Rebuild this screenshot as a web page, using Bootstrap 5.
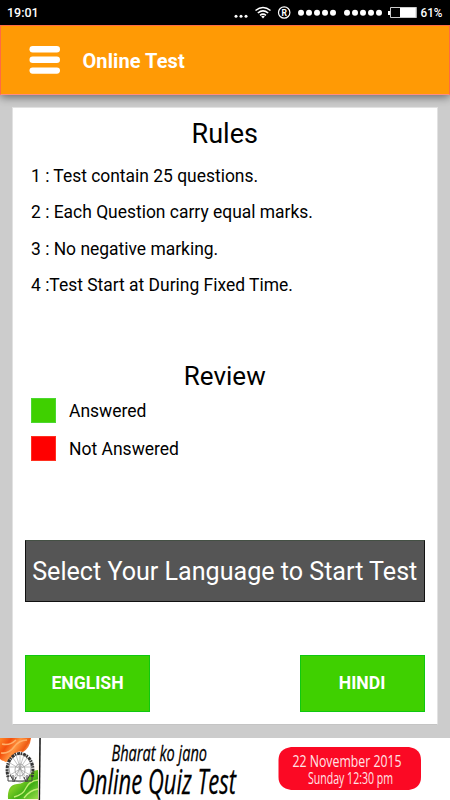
<!DOCTYPE html>
<html lang="en">
<head>
<meta charset="utf-8">
<meta name="viewport" content="width=device-width, initial-scale=1">
<title>Online Test</title>
<link href="https://cdn.jsdelivr.net/npm/bootstrap@5.3.0/dist/css/bootstrap.min.css" rel="stylesheet">
<style>
body{font-family:Roboto,"Liberation Sans",sans-serif;background:#ccc;color:#000;width:450px;height:800px;overflow:hidden}
.statusbar{height:25px;font-size:12.5px;font-weight:500;line-height:25px;padding:0 7px}
.appbar{height:70px;background:#ff9a05;border:1px solid #ff6a45;border-bottom:1px solid #ff8c80;box-shadow:0 2px 9px rgba(0,0,0,.5);padding-left:28px;gap:21.5px}
.appbar h1{font-size:20px;letter-spacing:.08px;line-height:24px;padding-top:1px}
.sheet{margin:12px 12.5px 0 12px;height:618px;padding:0 12px;border:1px solid #e2e2e2;border-bottom-color:#c4c4c4}
.heading{font-size:27px;line-height:50px;font-weight:400;padding-top:1px}
.heading-rules{margin-bottom:-1px}
.heading-review{font-size:26px;line-height:36px;margin-top:54px}
.rules{padding-left:6px;font-size:17.45px;line-height:36.3px}
.legend{padding-left:6px;gap:12.5px;font-size:17.5px;margin-top:4px}
.legend .entry{height:25px;gap:13px}
.legend .label-text{padding-top:1px}
.swatch{width:25px;height:25px}
.sw-yes{background:#3fd000;border:1px solid #4cd830}
.sw-no{background:#f00;border:1px solid #ff3020}
.prompt{height:62px;margin-top:79px;background:#555;border:1px solid #111;border-top-color:#445044;color:#fff;font-size:25.1px;line-height:62px}
.choices{margin-top:53px}
.choices .btn{width:125px;height:57px;background:#3fd000;border:1px solid #0fc810;color:#fff;font-size:17.6px;font-weight:700}
.banner{margin-top:13px;height:62px}
</style>
<script src="https://cdn.jsdelivr.net/npm/bootstrap@5.3.0/dist/js/bootstrap.bundle.min.js"></script>
</head>
<body>
<div class="statusbar bg-black text-white d-flex justify-content-between">
  <span>19:01</span>
  <svg width="211" height="25" viewBox="232 0 211 25" fill="#fff">
    <circle cx="236" cy="16.200" r="1.500"/><circle cx="241" cy="16.200" r="1.500"/><circle cx="246" cy="16.200" r="1.500"/>
    <g fill="none" stroke="#fff" stroke-width="1.600"><path d="M255.500 10.500Q263 4.500 270.500 10.500M257.800 13Q263 8.800 268.200 13M260 15.300Q263 13 266 15.300"/></g>
    <path d="M261.200 16.500Q263 15.200 264.800 16.500L263 18.500Z"/>
    <circle cx="284.200" cy="12.500" r="5.700" fill="none" stroke="#fff" stroke-width="1.200"/>
    <text x="284.300" y="15.600" font-size="8.500" font-weight="700" text-anchor="middle">R</text>
    <g><circle cx="301" cy="12.700" r="3"/><circle cx="309" cy="12.700" r="3"/><circle cx="317" cy="12.700" r="3"/><circle cx="325" cy="12.700" r="3"/><circle cx="333" cy="12.700" r="3"/></g>
    <g><circle cx="347" cy="12.700" r="3"/><circle cx="355" cy="12.700" r="3"/><circle cx="363" cy="12.700" r="3"/><circle cx="371" cy="12.700" r="3"/><circle cx="379" cy="12.700" r="3"/></g>
    <path d="M388 11h2v4h-2zM400 7h16.500v11H400z"/><path d="M390.500 7.500h25.500v10h-25.500z" fill="none" stroke="#ccc"/>
    <text x="420.500" y="17" font-size="12.500" font-weight="500" textLength="22" lengthAdjust="spacingAndGlyphs">61%</text>
  </svg>
</div>
<header class="appbar d-flex align-items-center position-relative">
  <svg width="32" height="28" fill="#fff"><rect x=".5" y="0" width="30.500" height="6.500" rx="3.200"/><rect x=".5" y="10.500" width="30.500" height="6.500" rx="3.200"/><rect x=".5" y="21.500" width="30.500" height="6.200" rx="3.100"/></svg>
  <h1 class="m-0 fw-bold text-white">Online Test</h1>
</header>
<main class="sheet bg-white">
  <h2 class="heading heading-rules mt-0 text-center">Rules</h2>
  <div class="rules">
    <div>1 : Test contain 25 questions.</div>
    <div>2 : Each Question carry equal marks.</div>
    <div>3 : No negative marking.</div>
    <div>4 :Test Start at During Fixed Time.</div>
  </div>
  <h2 class="heading heading-review mb-0 text-center">Review</h2>
  <div class="legend d-flex flex-column">
    <div class="entry d-flex align-items-center"><span class="swatch sw-yes"></span><span class="label-text">Answered</span></div>
    <div class="entry d-flex align-items-center"><span class="swatch sw-no"></span><span class="label-text">Not Answered</span></div>
  </div>
  <div class="prompt text-center text-nowrap">Select Your Language to Start Test</div>
  <div class="choices d-flex justify-content-between">
    <button class="btn rounded-0 p-0">ENGLISH</button>
    <button class="btn rounded-0 p-0">HINDI</button>
  </div>
</main>
<footer class="banner bg-white">
  <svg class="d-block" width="450" height="62" viewBox="0 738 450 62" font-family="'Open Sans','Noto Sans',sans-serif">
    <defs>
      <linearGradient id="saffron" x1="0" y1="0" x2="1" y2=".5"><stop offset="0" stop-color="#ff8a2a"/><stop offset=".3" stop-color="#f4500c"/><stop offset=".55" stop-color="#ff9440"/><stop offset=".8" stop-color="#ee5a12"/><stop offset="1" stop-color="#ffd29a"/></linearGradient>
      <linearGradient id="leaf" x1="0" y1="0" x2="1" y2="1"><stop offset="0" stop-color="#3c9a10"/><stop offset=".4" stop-color="#7ccc24"/><stop offset=".65" stop-color="#3fae14"/><stop offset="1" stop-color="#9be04a"/></linearGradient>
      <linearGradient id="paper" x1="0" y1="0" x2="1" y2="1"><stop offset="0" stop-color="#fff"/><stop offset=".6" stop-color="#fff"/><stop offset="1" stop-color="#fff0cc"/></linearGradient>
    </defs>
    <path d="M0 738h39v62H0z" fill="url(#paper)"/>
    <path d="M0 738h31q-1 10-8 14-6-2-11 5-5 7-8 4-2 0-4-2z" fill="url(#saffron)"/>
    <path d="M2 744q8 2 14-4M1 753q8 1 13-6t13-7" fill="none" stroke="#ffb06a" stroke-width="1.500"/>
    <path d="M8 799q-1-14 9-15 8 0 12-8 3-6 9-6v29z" fill="url(#leaf)"/>
    <path d="M14 797q9-2 12-9t12-8M24 798q6-8 14-9" fill="none" stroke="#c3ef75" stroke-width="1.300"/>
    <g fill="none" stroke="#222" transform="translate(20 767)">
      <ellipse cy="1" rx="11" ry="14" stroke="#aaa" fill="#fff" fill-opacity=".7"/>
      <path d="M-12 10Q-15-3-8-10T8-10Q15-3 12 10" stroke="#333" stroke-width="3" stroke-dasharray="1.500 1 3 .7"/>
      <ellipse cy="3" rx="5" ry="6" stroke="#888" stroke-width=".7" fill="#fff"/>
      <path d="M0-13V12M-10 0H10M-7-9L7 12M-7 12L7-9M-4-12L4 12M4-12L-4 12M-10-4L10 8M-10 8L10-4" stroke="#999" stroke-width=".6"/>
      <path d="M-12 8v6h24V8M-10 8l3 5M-7 8v7M-4 10l-2 5M4 10l2 5M7 8v7M10 8l-3 5" stroke="#444" stroke-width="1"/>
    </g>
    <path d="M39.300 738h1.500l-.7 62h-1.400z" fill="#111"/>
    <g font-style="italic" fill="#000" stroke="#000" stroke-width=".3">
      <text x="111.500" y="760.500" font-size="22" textLength="95.500" lengthAdjust="spacingAndGlyphs">Bharat ko jano</text>
      <text x="79" y="793.500" font-size="34" textLength="157" lengthAdjust="spacingAndGlyphs">Online Quiz Test</text>
    </g>
    <path d="M291 747H409Q421 749 421 760V777Q421 788 409 790H291Q278.500 788 278.500 777V760Q278.500 749 291 747Z" fill="#fb0924"/>
    <g fill="#ffe4e6">
      <text x="292.500" y="766.500" font-size="17" textLength="109" lengthAdjust="spacingAndGlyphs">22 November 2015</text>
      <text x="308" y="783.500" font-size="16.500" textLength="85" lengthAdjust="spacingAndGlyphs">Sunday 12:30 pm</text>
    </g>
  </svg>
</footer>
</body>
</html>
